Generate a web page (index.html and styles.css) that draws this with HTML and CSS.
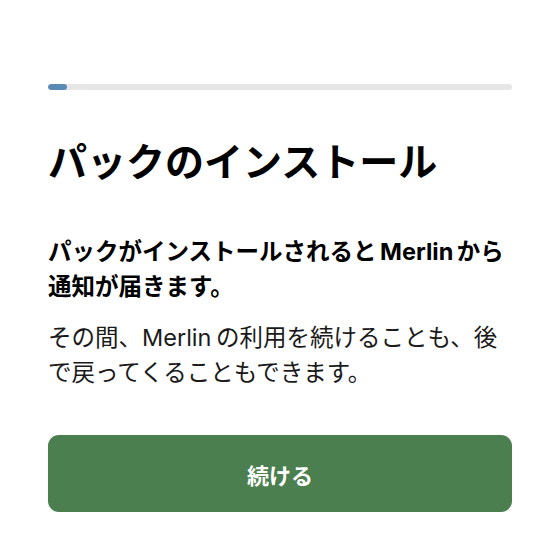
FILE: index.html
```html
<!DOCTYPE html>
<html lang="ja">
<head>
    <meta charset="UTF-8">
    <meta name="viewport" content="width=device-width, initial-scale=1.0">
    <title>パックのインストール</title>
    <link rel="stylesheet" href="styles.css">
</head>
<body>
    <div class="screen">
        <div class="progress">
            <div class="progress-fill" style="width: 4%;"></div>
        </div>

        <h1 class="title">パックのインストール</h1>

        <p class="lead">パックがインストールされると Merlin から通知が届きます。</p>
        <p class="note">その間、Merlin の利用を続けることも、後で戻ってくることもできます。</p>

        <button class="btn-continue">続ける</button>
    </div>
</body>
</html>
```

FILE: styles.css
```css
* {
    margin: 0;
    padding: 0;
    box-sizing: border-box;
}

body {
    font-family: "Inter", "Noto Sans CJK JP", sans-serif;
    background: #fff;
    color: #000;
}

.screen {
    padding: 84px 48px 0;
}

.progress {
    height: 6px;
    background: #e6e6e6;
    border-radius: 3px;
    overflow: hidden;
}

.progress-fill {
    height: 100%;
    background: #5a8bb5;
    border-radius: 3px;
}

.title {
    font-size: 39px;
    font-weight: 700;
    line-height: 48px;
    margin-top: 48px;
}

.lead {
    font-size: 23.5px;
    font-weight: 700;
    line-height: 35px;
    margin-top: 48px;
    word-spacing: -2px;
}

.note {
    font-size: 23.5px;
    line-height: 35px;
    margin-top: 16px;
    color: #1a1a1a;
    word-spacing: -2px;
}

.btn-continue {
    display: block;
    width: 100%;
    height: 77px;
    margin-top: 45px;
    border: none;
    border-radius: 11px;
    background: #4b7f50;
    color: #fff;
    font-family: inherit;
    font-size: 22px;
    font-weight: 700;
}
```
